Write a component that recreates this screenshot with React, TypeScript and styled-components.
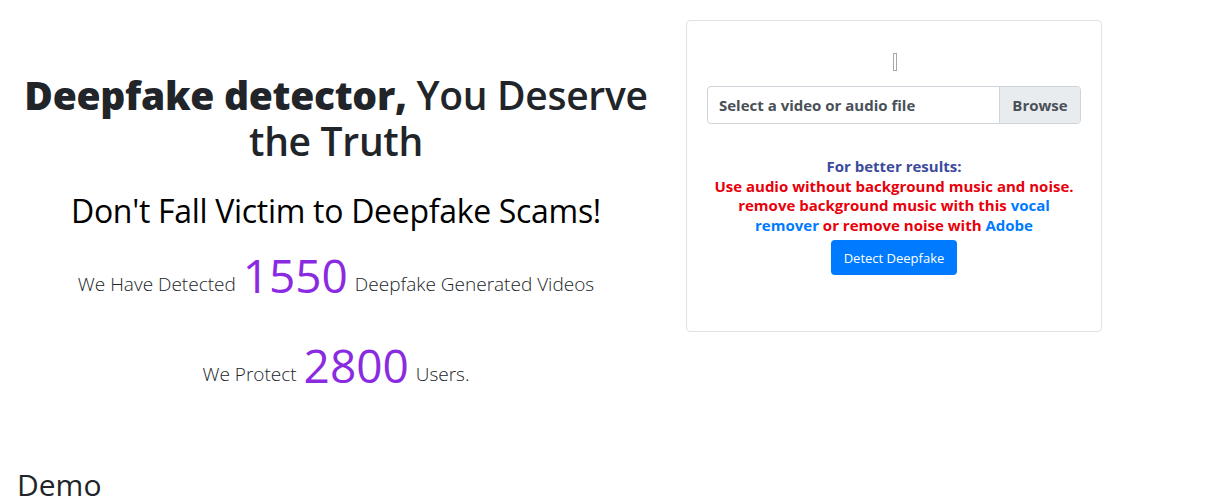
import styled, { createGlobalStyle } from "styled-components";

const GlobalStyle = createGlobalStyle`
    body {
        margin: 0;
        font-family: "Open Sans", "Noto Sans", sans-serif;
        color: #212529;
        background: #fff;
    }
`;

const Page = styled.div`
    width: 1220px;
    height: 500px;
    overflow: hidden;
`;

const Row = styled.div`
    display: flex;
    align-items: flex-start;
`;

const Hero = styled.div`
    width: 672px;
    text-align: center;
    padding-top: 72px;
`;

const Title = styled.h1`
    margin: 0;
    font-size: 39px;
    font-weight: 600;
    line-height: 46px;
    color: #212529;
    letter-spacing: -0.3px;

    b {
        font-weight: 800;
    }
`;

const Subtitle = styled.h2`
    margin: 27px 0 0;
    font-size: 32px;
    font-weight: 500;
    line-height: 40px;
    color: #000;
    letter-spacing: -0.3px;
`;

const Stat = styled.p<{ gap: number }>`
    margin: ${(props) => props.gap}px 0 0;
    font-size: 19px;
    font-weight: 300;
    line-height: 56px;
    color: #212529;
`;

const Count = styled.span`
    font-size: 46px;
    font-weight: 400;
    color: #8a2be2;
    vertical-align: -2px;
    margin: 0 2px;
`;

const Card = styled.div`
    margin: 20px 0 0 14px;
    width: 416px;
    height: 312px;
    box-sizing: border-box;
    border: 1px solid #dfe2e6;
    border-radius: 4px;
    padding: 32px 20px 0;
    display: flex;
    flex-direction: column;
    align-items: center;
`;

const Placeholder = styled.span`
    display: block;
    width: 2px;
    height: 16px;
    border: 1px solid #a8a8a8;
    margin-left: 2px;
`;

const FilePicker = styled.div`
    margin-top: 15px;
    width: 374px;
    height: 38px;
    box-sizing: border-box;
    border: 1px solid #ced4da;
    border-radius: 4px;
    display: flex;
    overflow: hidden;
`;

const FileLabel = styled.div`
    flex: 1;
    display: flex;
    align-items: center;
    padding-left: 11px;
    font-size: 15px;
    font-weight: 700;
    color: #495057;
`;

const Browse = styled.div`
    width: 80px;
    display: flex;
    align-items: center;
    justify-content: center;
    background: #e9ecef;
    border-left: 1px solid #ced4da;
    font-size: 15px;
    font-weight: 700;
    color: #495057;
`;

const Tips = styled.div`
    margin-top: 33px;
    width: 366px;
    text-align: center;
    font-size: 15px;
    font-weight: 700;
    line-height: 19.5px;
`;

const TipHead = styled.div`
    color: #3c4a9c;
`;

const Warn = styled.span`
    color: #e8000b;
`;

const Link = styled.a`
    color: #007bff;
    text-decoration: none;
`;

const DetectButton = styled.button`
    margin-top: 5px;
    height: 35px;
    padding: 0 13px;
    border: none;
    border-radius: 4px;
    background: #007bff;
    color: #fff;
    font-family: "Open Sans", "Noto Sans", sans-serif;
    font-size: 13px;
    cursor: pointer;
`;

const Demo = styled.h2`
    margin: 65px 0 0 17px;
    font-size: 30px;
    font-weight: 500;
    line-height: 36px;
    color: #212529;
`;

export default function App() {
    return (
        <Page>
            <GlobalStyle />
            <Row>
                <Hero>
                    <Title>
                        <b>Deepfake detector,</b> You Deserve the Truth
                    </Title>
                    <Subtitle>Don't Fall Victim to Deepfake Scams!</Subtitle>
                    <Stat gap={16}>
                        We Have Detected <Count>1550</Count> Deepfake Generated Videos
                    </Stat>
                    <Stat gap={25}>
                        We Protect <Count>2800</Count> Users.
                    </Stat>
                </Hero>
                <Card>
                    <Placeholder />
                    <FilePicker>
                        <FileLabel>Select a video or audio file</FileLabel>
                        <Browse>Browse</Browse>
                    </FilePicker>
                    <Tips>
                        <TipHead>For better results:</TipHead>
                        <Warn>Use audio without background music and noise.</Warn>
                        <br />
                        <Warn>remove background music with this </Warn>
                        <Link href="#">vocal remover</Link>
                        <Warn> or remove noise with </Warn>
                        <Link href="#">Adobe</Link>
                    </Tips>
                    <DetectButton>Detect Deepfake</DetectButton>
                </Card>
            </Row>
            <Demo>Demo</Demo>
        </Page>
    );
}
